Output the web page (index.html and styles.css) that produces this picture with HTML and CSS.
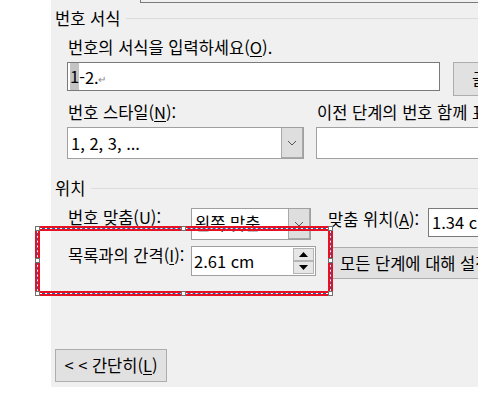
FILE: index.html
```html
<!DOCTYPE html>
<html lang="ko">
<head>
    <meta charset="UTF-8">
    <title>다단계 목록 정의</title>
    <link rel="stylesheet" href="styles.css">
</head>
<body>

<div class="page">
    <div class="dialog">
        <div class="top-frag"></div>

        <!-- 번호 서식 -->
        <div class="group-head">
            <span>번호 서식</span>
            <div class="group-line"></div>
        </div>
        <div class="field-label">번호의 서식을 입력하세요(<u>O</u>).</div>
        <div class="row format-row">
            <div class="textbox format-box">
                <span class="hl">1</span>-2.<span class="para">↵</span>
            </div>
            <div class="btn font-btn">글꼴(<u>F</u>)...</div>
        </div>
        <div class="row label-row">
            <div class="style-label">번호 스타일(<u>N</u>):</div>
            <div>이전 단계의 번호 함께 표시(<u>C</u>):</div>
        </div>
        <div class="row select-row">
            <div class="combo style-combo">
                <span class="combo-text">1, 2, 3, ...</span>
                <span class="combo-arrow">
                    <svg width="10" height="6" viewBox="0 0 10 6"><polyline points="1,1 5,5 9,1" fill="none" stroke="#555" stroke-width="1"/></svg>
                </span>
            </div>
            <div class="textbox level-box"></div>
        </div>

        <!-- 위치 -->
        <div class="group-head pos-head">
            <span>위치</span>
            <div class="group-line"></div>
        </div>
        <div class="row pos-row">
            <div class="pos-label">번호 맞춤(<u>U</u>):</div>
            <div class="combo align-combo">
                <span class="combo-text">왼쪽 맞춤</span>
                <span class="combo-arrow">
                    <svg width="10" height="6" viewBox="0 0 10 6"><polyline points="1,1 5,5 9,1" fill="none" stroke="#555" stroke-width="1"/></svg>
                </span>
            </div>
            <div class="at-label">맞춤 위치(<u>A</u>):</div>
            <div class="textbox at-box">1.34 cm</div>
        </div>
        <div class="row indent-row">
            <div class="pos-label">목록과의 간격(<u>I</u>):</div>
            <div class="textbox spin-box">
                <span class="spin-text">2.61 cm</span>
                <span class="spin">
                    <span class="spin-btn"><svg width="9" height="5" viewBox="0 0 9 5"><polygon points="0,5 4.5,0 9,5" fill="#000"/></svg></span>
                    <span class="spin-btn"><svg width="9" height="5" viewBox="0 0 9 5"><polygon points="0,0 4.5,5 9,0" fill="#000"/></svg></span>
                </span>
            </div>
            <div class="btn all-btn">모든 단계에 대해 설정(<u>E</u>)...</div>
        </div>

        <div class="btn less-btn">&lt; &lt; 간단히(<u>L</u>)</div>
    </div>

    <!-- selection frame drawn over the dialog -->
    <div class="sel">
        <span class="handle h-tl"></span>
        <span class="handle h-tm"></span>
        <span class="handle h-tr"></span>
        <span class="handle h-ml"></span>
        <span class="handle h-mr"></span>
        <span class="handle h-bl"></span>
        <span class="handle h-bm"></span>
        <span class="handle h-br"></span>
    </div>
</div>

</body>
</html>
```

FILE: styles.css
```css
* {
    box-sizing: border-box;
    margin: 0;
    padding: 0;
}

body {
    background-color: #fff;
    font-family: "Noto Sans CJK KR", "Noto Sans", sans-serif;
    font-size: 16.5px;
    color: #000;
    overflow: hidden;
}

u {
    text-decoration: underline;
    text-decoration-thickness: 1px;
    text-underline-offset: 2px;
}

.page {
    position: relative;
    width: 478px;
    height: 409px;
}

.dialog {
    margin-left: 51px;
    width: 427px;
    height: 387px;
    background-color: #f0f0f0;
    overflow: hidden;
}

.top-frag {
    margin-left: 89px;
    width: 400px;
    height: 3px;
    border-left: 1px solid #7a7a7a;
    border-bottom: 1px solid #7a7a7a;
}

.group-head {
    display: flex;
    align-items: center;
    height: 18px;
    line-height: 18px;
    margin-top: 6px;
    padding-left: 4px;
}

.group-line {
    flex: 1;
    height: 1px;
    margin-left: 6px;
    background-color: #dcdcdc;
}

.field-label {
    padding-left: 17px;
    line-height: 18px;
    margin-top: 11px;
}

.row {
    display: flex;
    align-items: flex-start;
    white-space: nowrap;
}

.row > * {
    flex-shrink: 0;
}

.textbox {
    background-color: #fff;
    border: 1px solid #7a7a7a;
}

.btn {
    background-color: #e1e1e1;
    border: 1px solid #adadad;
    white-space: nowrap;
}

.format-row {
    margin-top: 6px;
    padding-left: 16px;
}

.format-box {
    display: flex;
    align-items: center;
    width: 373px;
    height: 29px;
    padding-left: 2px;
}

.hl {
    background-color: #c4c4c4;
    line-height: 27px;
}

.para {
    font-size: 10px;
    color: #888;
    margin-left: -1px;
    margin-top: 4px;
}

.font-btn {
    margin-left: 13px;
    width: 80px;
    height: 34px;
    line-height: 32px;
    padding-left: 18px;
}

.label-row {
    margin-top: 7px;
    padding-left: 17px;
    line-height: 18px;
}

.style-label {
    width: 249px;
}

.select-row {
    margin-top: 6px;
    padding-left: 16px;
}

.combo {
    display: flex;
    background-color: #fff;
    border: 1px solid #a0a0a0;
}

.combo-text {
    flex: 1;
    padding-left: 3px;
}

.combo-arrow {
    width: 22px;
    display: flex;
    align-items: center;
    justify-content: center;
    background-color: #dedede;
    border: 1px solid #a8a8a8;
    border-top: none;
}

.style-combo {
    width: 237px;
    height: 32px;
    line-height: 30px;
}

.level-box {
    margin-left: 12px;
    width: 200px;
    height: 32px;
    border-color: #a0a0a0;
}

.pos-head {
    margin-top: 20px;
}

.pos-row {
    margin-top: 11px;
    padding-left: 17px;
}

.pos-label {
    width: 123px;
    line-height: 18px;
}

.align-combo {
    width: 120px;
    height: 32px;
    line-height: 28px;
}

.at-label {
    margin-left: 17px;
    margin-top: 2px;
    width: 100px;
    line-height: 18px;
}

.at-box {
    width: 120px;
    height: 29px;
    line-height: 27px;
    padding-left: 3px;
}

.indent-row {
    margin-top: 6px;
    padding-left: 17px;
}

.spin-box {
    display: flex;
    width: 125px;
    height: 30px;
    border-color: #a0a0a0;
}

.spin-text {
    flex: 1;
    line-height: 28px;
    padding-left: 2px;
}

.spin {
    display: flex;
    flex-direction: column;
    padding: 1px 1px 1px 0;
}

.spin-btn {
    width: 21px;
    height: 13px;
    display: flex;
    align-items: center;
    justify-content: center;
    background-color: #e6e6e6;
    border: 1px solid #b4b4b4;
}

.all-btn {
    margin-left: 13px;
    margin-top: 1px;
    width: 200px;
    height: 32px;
    line-height: 30px;
    padding-left: 10px;
}

.less-btn {
    margin-top: 70px;
    margin-left: 4px;
    width: 112px;
    height: 33px;
    line-height: 31px;
    text-align: center;
}

/* selection frame */
.sel {
    position: absolute;
    left: 35px;
    top: 226px;
    width: 298px;
    height: 70px;
    border: 2px solid #e81123;
    box-shadow: inset 0 0 0 3px #e81123;
}

.sel::before,
.sel::after {
    content: "";
    position: absolute;
    inset: 0;
}

.sel::before {
    border: 1px solid #fff;
}

.sel::after {
    border: 1px dashed #2a5caa;
}

.handle {
    position: absolute;
    width: 5px;
    height: 5px;
    background-color: #fff;
    border: 1px solid #707070;
    z-index: 1;
}

.h-tl { left: -2px; top: -2px; }
.h-tm { left: calc(50% - 3px); top: -2px; }
.h-tr { right: -2px; top: -2px; }
.h-ml { left: -2px; top: calc(50% - 3px); }
.h-mr { right: -2px; top: calc(50% - 3px); }
.h-bl { left: -2px; bottom: -2px; }
.h-bm { left: calc(50% - 3px); bottom: -2px; }
.h-br { right: -2px; bottom: -2px; }
```
